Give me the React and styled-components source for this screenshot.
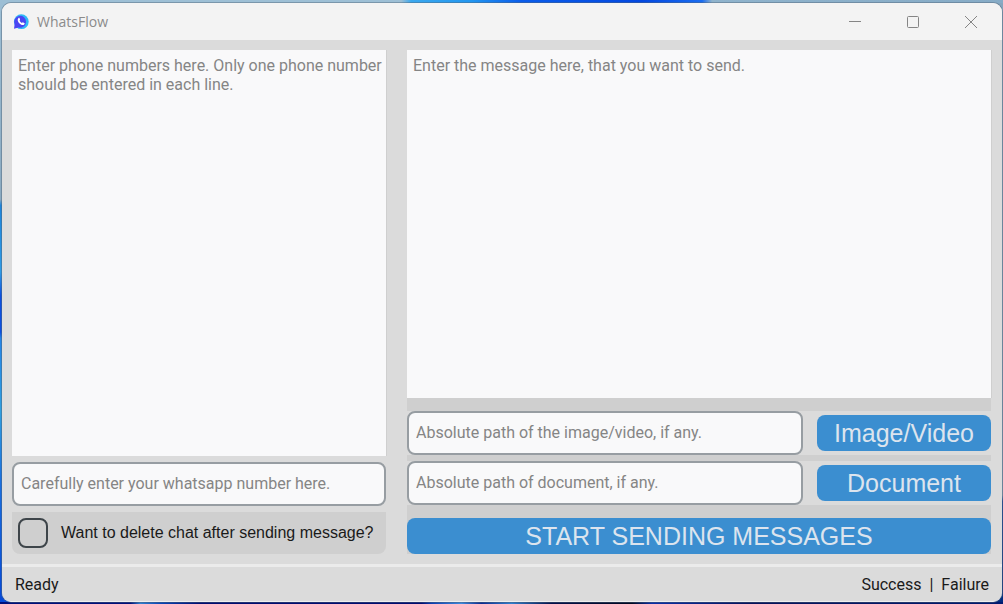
import React from 'react';
import styled, { createGlobalStyle } from 'styled-components';

const GlobalStyle = createGlobalStyle`
  * { box-sizing: border-box; }
  body {
    margin: 0;
    font-family: Roboto, "Liberation Sans", sans-serif;
    font-size: 16px;
    color: #1a1a1a;
  }
  button, input, textarea { font: inherit; margin: 0; }
`;

const Desktop = styled.div`
  display: flex;
  min-height: 100vh;
  padding: 3px 1px 2px 2px;
  background:
    linear-gradient(90deg, #9dbfd5 0 40%, #3aa8ee 41%, #2196f0 47%, #0a5cea 52%, #0348e0 64%, #1a6cf0 70%, #8fb3cc 71%, #86abc6 100%) top / 100% 3px no-repeat,
    linear-gradient(90deg, #00107a 0 13%, #2f7fd0 14%, #0846b8 16%, #000c70 20% 42%, #0a3cb0 43%, #3c8ae0 46%, #0a2a90 48%, #2f7fd0 51%, #03104a 55%, #000820 63%, #0a2fa8 65%, #06125a 75%, #001a70 100%) bottom / 100% 2px no-repeat,
    linear-gradient(180deg, #9dbfd5 0, #8aa9c0 33%, #1c84dc 34%, #2f9be6 45%, #0b4fe0 49%, #0b4fe0 55%, #2484e8 56%, #2f9fe0 68%, #1a6fe0 80%, #0548d8 100%) left / 50% 100% no-repeat,
    linear-gradient(180deg, #86a6be 0, #7f9bb4 82%, #0a3f9c 83%, #002a80 100%);
`;

const AppWindow = styled.main`
  flex: 1;
  display: flex;
  flex-direction: column;
  overflow: hidden;
  border-radius: 9px;
  border-bottom: 1px solid #efefef;
  background: #dbdbdb;
  box-shadow: 0 0 0 1px rgba(80, 100, 120, 0.45);
`;

const TitleBar = styled.header`
  display: flex;
  align-items: center;
  height: 37px;
  padding: 0 2px 0 11px;
  background: #f3f3f3;
`;

const AppTitle = styled.h1`
  flex: 1;
  margin: 0 0 0 8px;
  font: 400 14px/20px "Open Sans", "Noto Sans", sans-serif;
  color: #8b8b8b;
`;

const CaptionButton = styled.button`
  display: flex;
  align-items: center;
  justify-content: center;
  width: 58px;
  height: 35px;
  padding: 0;
  border: 0;
  background: transparent;
  color: #858585;
`;

const Content = styled.form`
  flex: 1;
  display: grid;
  grid-template-columns: 374fr 584fr;
  gap: 21px;
  padding: 10px 11px 10px 10px;
`;

const Column = styled.section`
  display: flex;
  flex-direction: column;
  min-width: 0;
  gap: ${(p) => p.$gap || 0}px;
`;

const TextBox = styled.textarea`
  flex: 1;
  display: block;
  width: 100%;
  padding: 6px 0 6px 6px;
  border: 0;
  border-radius: 0;
  outline: 0;
  resize: none;
  background: #f9f9fa;
  box-shadow: 1px 0 #cfcfcf;
  line-height: 19px;
  &::placeholder { color: #858585; opacity: 1; }
`;

const Entry = styled.input`
  flex: ${(p) => (p.$grow ? '1' : 'none')};
  min-width: 0;
  height: 44px;
  padding: 0 7px 2px;
  border: 2px solid #979da2;
  border-radius: 8px;
  outline: 0;
  background: #f9f9fa;
  &::placeholder { color: #858585; opacity: 1; }
`;

const CheckRow = styled.label`
  display: flex;
  align-items: center;
  gap: 13px;
  height: 42px;
  padding: 0 6px;
  border-radius: 0 0 8px 8px;
  background: #cfcfcf;
  font-family: "Liberation Sans", Arial, sans-serif;
  white-space: nowrap;
`;

const CheckBox = styled.input`
  appearance: none;
  flex: none;
  width: 30px;
  height: 30px;
  margin: 0;
  border: 2px solid #3e454a;
  border-radius: 8px;
  &:checked { background: #3b8ed0; }
`;

const Actions = styled.div`
  display: flex;
  flex-direction: column;
  gap: 6px;
  padding-top: 13px;
  background: #cfcfcf;
`;

const FileRow = styled.div`
  display: flex;
  align-items: center;
  gap: 14px;
  background: #dbdbdb;
`;

const Button = styled.button`
  width: ${(p) => (p.$wide ? '100%' : '174px')};
  height: 36px;
  padding: 0;
  border: 0;
  border-radius: 8px;
  background: #3b8ed0;
  color: #dce4ee;
  font: 25px/36px "Liberation Sans", Arial, sans-serif;
`;

const SendArea = styled.div`
  padding-top: 7px;
`;

const StatusBar = styled.footer`
  display: flex;
  justify-content: space-between;
  align-items: center;
  height: 37px;
  padding: 0 13px;
  border-top: 3px solid #ebebeb;
`;

const Results = styled.div`
  display: flex;
  gap: 8px;
`;

function Logo() {
  return (
    <svg width="16" height="16" viewBox="0 0 16 16" aria-hidden="true">
      <circle cx="8.3" cy="7.7" r="7.4" fill="#2fb8f6" />
      <path d="M1 14.8 1.7 10A5.900 5.900 0 1 1 5.600 13.400Z" fill="#4b45f2" />
      <path
        d="M5.4 4.2c.5-.5 1-.4 1.2.1l.5 1.2c.1.4-.4.8-.5 1.1.4 1 1.3 1.9 2.3 2.4.4 0 .8-.8 1.2-.6l1.3.7c.4.3.2 1-.2 1.4-.8.8-2 .7-3.3 0C6.500 9.700 5.300 8.400 4.900 7c-.3-1-.2-2.100.5-2.800Z"
        fill="#fff"
      />
    </svg>
  );
}

export default function App() {
  return (
    <>
      <GlobalStyle />
      <Desktop>
        <AppWindow>
          <TitleBar>
            <Logo />
            <AppTitle>WhatsFlow</AppTitle>
            <CaptionButton type="button" aria-label="Minimize">
              <svg width="12" height="12" stroke="currentColor"><path d="M0 5.500H12" /></svg>
            </CaptionButton>
            <CaptionButton type="button" aria-label="Maximize">
              <svg width="12" height="12" fill="none" stroke="currentColor">
                <rect x=".5" y=".5" width="11" height="11" rx="1" />
              </svg>
            </CaptionButton>
            <CaptionButton type="button" aria-label="Close">
              <svg width="12" height="12" stroke="currentColor"><path d="M0 0 12 12M12 0 0 12" /></svg>
            </CaptionButton>
          </TitleBar>
          <Content onSubmit={(e) => e.preventDefault()}>
            <Column $gap={6}>
              <TextBox
                aria-label="Phone numbers"
                placeholder="Enter phone numbers here. Only one phone number should be entered in each line."
              />
              <Entry
                type="tel"
                aria-label="Your WhatsApp number"
                placeholder="Carefully enter your whatsapp number here."
              />
              <CheckRow>
                <CheckBox type="checkbox" />
                Want to delete chat after sending message?
              </CheckRow>
            </Column>
            <Column>
              <TextBox aria-label="Message" placeholder="Enter the message here, that you want to send." />
              <Actions>
                <FileRow>
                  <Entry $grow aria-label="Image or video path" placeholder="Absolute path of the image/video, if any." />
                  <Button type="button">Image/Video</Button>
                </FileRow>
                <FileRow>
                  <Entry $grow aria-label="Document path" placeholder="Absolute path of document, if any." />
                  <Button type="button">Document</Button>
                </FileRow>
                <SendArea>
                  <Button $wide type="submit">START SENDING MESSAGES</Button>
                </SendArea>
              </Actions>
            </Column>
          </Content>
          <StatusBar>
            <span>Ready</span>
            <Results>
              <span>Success</span>
              <span>|</span>
              <span>Failure</span>
            </Results>
          </StatusBar>
        </AppWindow>
      </Desktop>
    </>
  );
}
